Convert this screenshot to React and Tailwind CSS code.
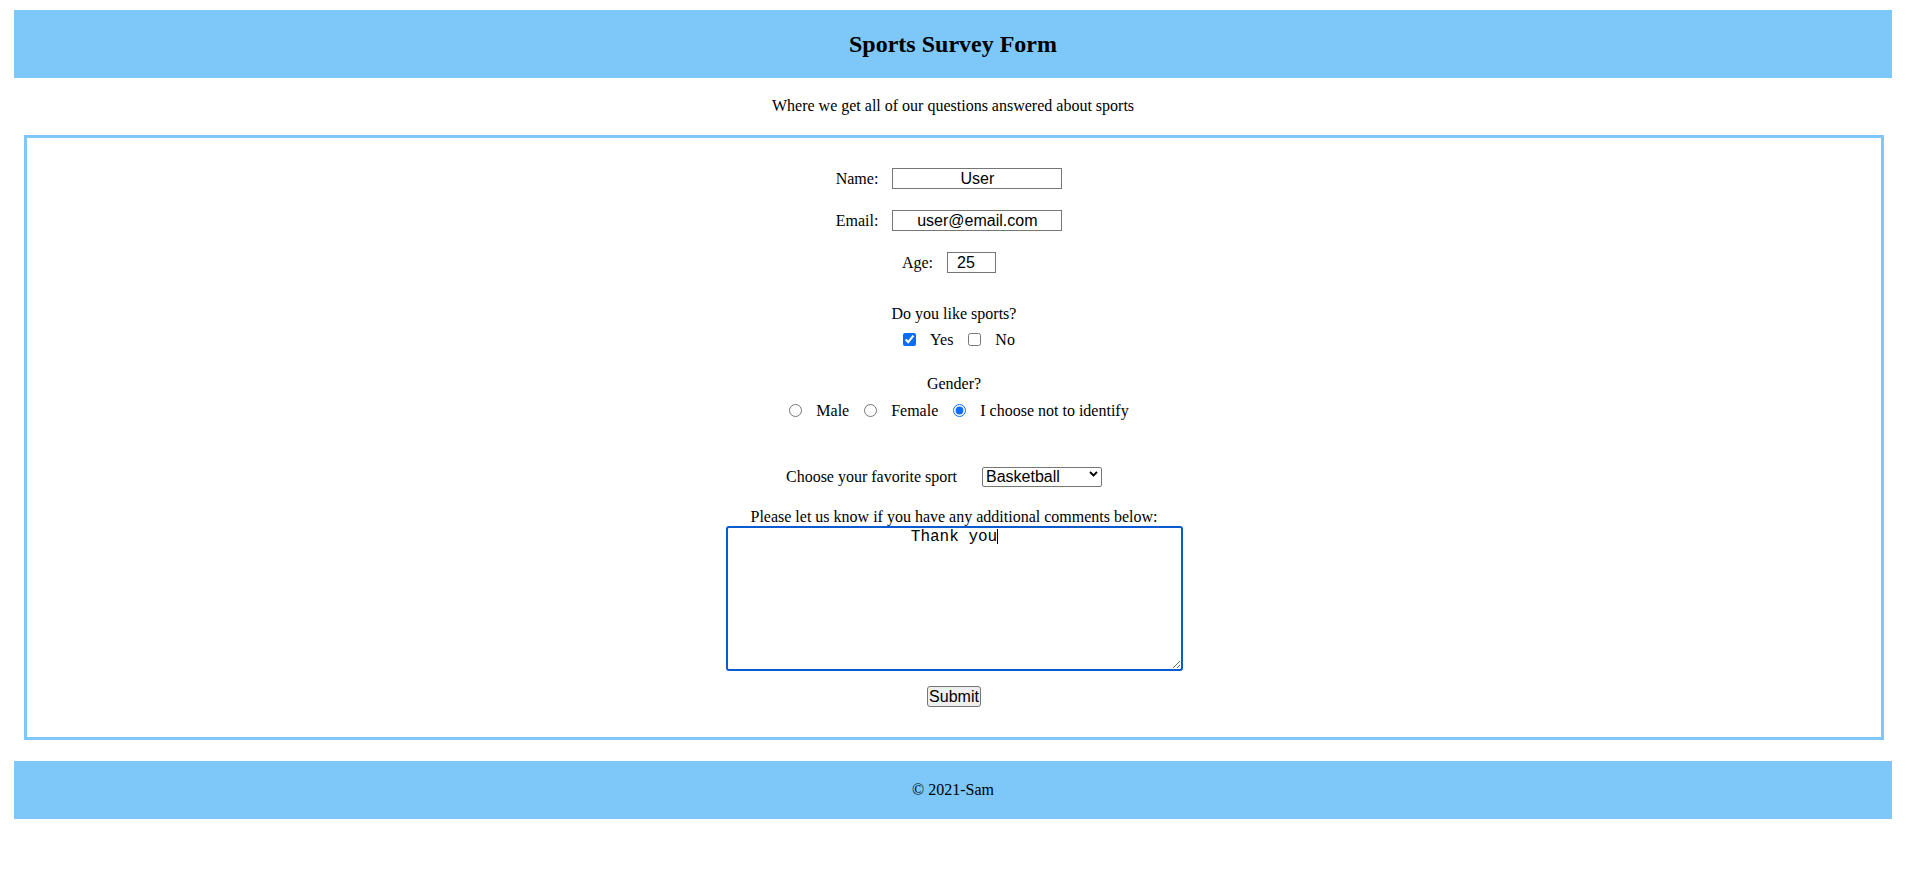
// Sports survey form page
import { useState } from "react";

const serif = { fontFamily: '"Liberation Serif", "Times New Roman", serif' };

function TextRow({ label, children }) {
  return (
    <div className="flex h-[21px] items-center justify-center gap-[14px] pr-[10px]">
      <label className="leading-[18px]">{label}</label>
      {children}
    </div>
  );
}

function Choice({ type, name, label, checked, last }) {
  return (
    <>
      <input
        type={type}
        name={name}
        defaultChecked={checked}
        className="m-0 h-[13px] w-[13px] accent-[#0b6cf5]"
      />
      <label className={clsx_("ml-[14px] leading-[18px]", last ? "" : "mr-[15px]")}>
        {label}
      </label>
    </>
  );
}

function clsx_(...c) {
  return c.filter(Boolean).join(" ");
}

export default function App() {
  const [sport, setSport] = useState("basketball");

  return (
    <div className="min-h-[873px] bg-white text-[16px] text-black" style={serif}>
      {/* Header */}
      <header className="mx-[14px] mt-[10px] flex h-[68px] items-center justify-center bg-[#7dc7f9]">
        <h2 className="text-[24px] font-bold leading-[28px]">Sports Survey Form</h2>
      </header>

      <p className="mt-[19px] text-center leading-[18px]">
        Where we get all of our questions answered about sports
      </p>

      {/* Form box */}
      <form
        className="mt-[20px] ml-[24px] mr-[22px] flex flex-col items-stretch border-[3px] border-[#7dc7f9] pt-[30px] pb-[30px]"
        onSubmit={(e) => e.preventDefault()}
      >
        <div className="flex flex-col gap-[21px]">
          <TextRow label="Name:">
            <input
              type="text"
              defaultValue="User"
              className="box-border h-[21px] w-[170px] border border-[#767676] px-[2px] text-center text-[16px] leading-[18px]"
              style={{ fontFamily: '"Liberation Sans", Arial, sans-serif' }}
            />
          </TextRow>
          <TextRow label="Email:">
            <input
              type="email"
              defaultValue="user@email.com"
              className="box-border h-[21px] w-[170px] border border-[#767676] px-[2px] text-center text-[16px] leading-[18px]"
              style={{ fontFamily: '"Liberation Sans", Arial, sans-serif' }}
            />
          </TextRow>
          <TextRow label="Age:">
            <input
              type="text"
              defaultValue="25"
              className="box-border h-[21px] w-[49px] border border-[#767676] pl-[9px] text-left text-[16px] leading-[18px]"
              style={{ fontFamily: '"Liberation Sans", Arial, sans-serif' }}
            />
          </TextRow>
        </div>

        <p className="mt-[32px] text-center leading-[18px]">Do you like sports?</p>
        <div className="mt-[7px] flex h-[19px] items-center justify-center pl-[10px]">
          <Choice type="checkbox" name="likes" label="Yes" checked />
          <Choice type="checkbox" name="likes" label="No" last />
        </div>

        <p className="mt-[26px] text-center leading-[18px]">Gender?</p>
        <div className="mt-[8px] flex h-[19px] items-center justify-center pl-[10px]">
          <Choice type="radio" name="gender" label="Male" />
          <Choice type="radio" name="gender" label="Female" />
          <Choice type="radio" name="gender" label="I choose not to identify" checked last />
        </div>

        <div className="mt-[47px] flex h-[20px] items-center justify-center gap-[25px] pr-[20px]">
          <label className="leading-[18px]">Choose your favorite sport</label>
          <div className="relative">
            <select
              value={sport}
              onChange={(e) => setSport(e.target.value)}
              className="box-border h-[20px] w-[120px] appearance-none rounded-[2px] border border-[#767676] bg-white pl-[3px] text-[16px] leading-[18px]"
              style={{ fontFamily: '"Liberation Sans", Arial, sans-serif' }}
            >
              <option value="basketball">Basketball</option>
              <option value="football">Football</option>
              <option value="baseball">Baseball</option>
              <option value="soccer">Soccer</option>
            </select>
            <svg
              className="pointer-events-none absolute right-[4px] top-[6px]"
              width="9"
              height="6"
              viewBox="0 0 9 6"
            >
              <path d="M1 1l3.5 3.5L8 1" fill="none" stroke="#000" strokeWidth="1.8" />
            </svg>
          </div>
        </div>

        <p className="mt-[21px] text-center leading-[18px]">
          Please let us know if you have any additional comments below:
        </p>
        <div className="flex justify-center">
          <div className="relative">
            <textarea
              defaultValue="Thank you"
              className="box-border block h-[145px] w-[457px] rounded-[3px] border-2 border-[#0a5bd0] px-[2px] py-0 text-center text-[16px] leading-[18px] outline-none"
              style={{ fontFamily: '"Liberation Mono", "Courier New", monospace' }}
            />
            <span className="pointer-events-none absolute left-[271px] top-[3px] h-[15px] w-px bg-black" />
          </div>
        </div>

        <div className="mt-[15px] flex justify-center">
          <button
            type="submit"
            className="box-border h-[21px] rounded-[3px] border border-[#767676] bg-[#efefef] px-[1px] text-[16px] leading-[18px]"
            style={{ fontFamily: '"Liberation Sans", Arial, sans-serif' }}
          >
            Submit
          </button>
        </div>
      </form>

      {/* Footer */}
      <footer className="mx-[14px] mt-[21px] flex h-[58px] items-center justify-center bg-[#7dc7f9]">
        <p className="leading-[18px]">© 2021-Sam</p>
      </footer>
    </div>
  );
}
